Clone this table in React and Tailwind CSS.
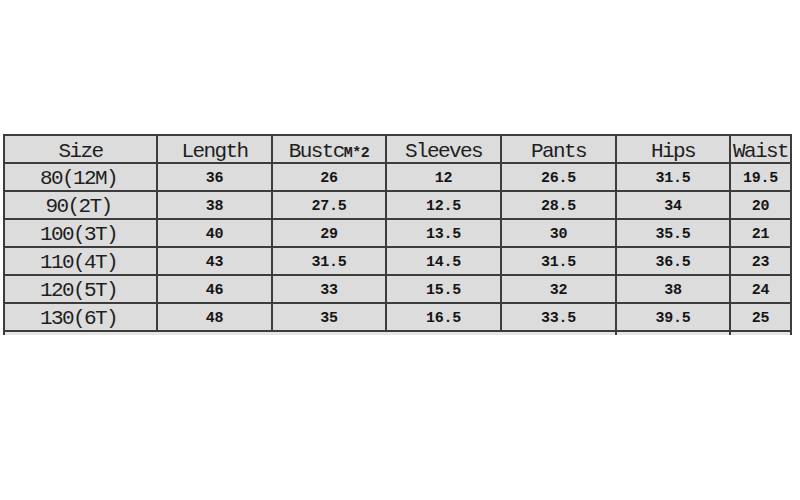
import React from 'react';

const headers = ['Size', 'Length', 'Bust', 'Sleeves', 'Pants', 'Hips', 'Waist'];

const rows = [
  ['80(12M)', '36', '26', '12', '26.5', '31.5', '19.5'],
  ['90(2T)', '38', '27.5', '12.5', '28.5', '34', '20'],
  ['100(3T)', '40', '29', '13.5', '30', '35.5', '21'],
  ['110(4T)', '43', '31.5', '14.5', '31.5', '36.5', '23'],
  ['120(5T)', '46', '33', '15.5', '32', '38', '24'],
  ['130(6T)', '48', '35', '16.5', '33.5', '39.5', '25'],
];

const mono = { fontFamily: '"Liberation Mono", "DejaVu Sans Mono", monospace' };

const App = () => {
  return (
    <div className="w-[800px] h-[500px] bg-white overflow-hidden" style={mono}>
      <div className="pt-[134px] pl-[3px]">
        <div className="w-[789px] bg-[#3c3c3c] pt-[2px] px-[2px] grid grid-cols-[151px_113px_112px_113px_113px_112px_59px] grid-rows-[26px_26px_26px_26px_26px_26px_26px_3px] gap-[2px]">
          {headers.map((h, i) => (
            <div
              key={h}
              className="bg-[#dcdcdc] flex items-center justify-center pt-[4px] text-[21px] tracking-[-1.6px] text-[#1e1e1e] leading-none whitespace-nowrap"
            >
              {i === 2 ? (
                <span>
                  Bustc<span className="text-[15px] font-bold tracking-[-0.5px]">M*2</span>
                </span>
              ) : (
                h
              )}
            </div>
          ))}
          {rows.map((r) =>
            r.map((v, j) =>
              j === 0 ? (
                <div
                  key={r[0] + j}
                  className="bg-[#dcdcdc] flex items-center justify-center pt-[2px] pr-[4px] text-[21px] tracking-[-1.6px] text-[#1e1e1e] leading-none whitespace-nowrap"
                >
                  {v}
                </div>
              ) : (
                <div
                  key={r[0] + j}
                  className="bg-[#dcdcdc] flex items-center justify-center pt-[2px] text-[15px] font-bold tracking-[-0.2px] text-[#151515] leading-none"
                >
                  {v}
                </div>
              )
            )
          )}
          <div className="col-span-5 bg-[#e6e6e6]" />
          <div className="bg-[#e6e6e6]" />
          <div className="bg-[#e6e6e6]" />
        </div>
      </div>
    </div>
  );
};

export default App;
